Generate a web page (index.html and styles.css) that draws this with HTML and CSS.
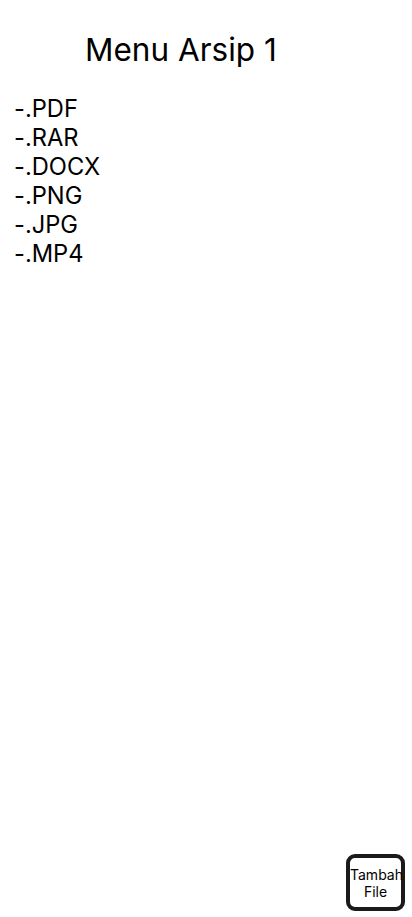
FILE: index.html
```html
<!DOCTYPE html>
<html>
<head>
<meta charset="utf-8">
<link rel="stylesheet" href="styles.css">
</head>
<body>
<div class="page">
  <h1 class="title">Menu Arsip 1</h1>
  <ul class="list">
    <li>-.PDF</li>
    <li>-.RAR</li>
    <li>-.DOCX</li>
    <li>-.PNG</li>
    <li>-.JPG</li>
    <li>-.MP4</li>
  </ul>
  <div class="footer">
    <button class="add-btn">Tambah File</button>
  </div>
</div>
</body>
</html>
```
FILE: styles.css
```css
html, body {
  margin: 0;
  padding: 0;
  background: #fff;
}
body {
  font-family: Inter, "Noto Sans", sans-serif;
  color: #000;
}
.page {
  width: 412px;
  height: 917px;
  display: flex;
  flex-direction: column;
}
.title {
  margin: 0;
  padding: 30px 0 0 85px;
  font-size: 31.5px;
  font-weight: 400;
  line-height: 39px;
}
.list {
  list-style: none;
  margin: 0;
  padding: 0 0 0 14px;
  margin-top: 25px;
  font-size: 23.7px;
  line-height: 29px;
}
.footer {
  margin-top: auto;
  display: flex;
  justify-content: flex-end;
  padding: 0 7px 6px 0;
}
.add-btn {
  width: 59px;
  height: 57px;
  border: 4px solid #1a1a1a;
  border-radius: 9px;
  background: #fff;
  font-family: Inter, sans-serif;
  font-size: 14px;
  line-height: 17px;
  padding: 0;
  color: #000;
}
```
